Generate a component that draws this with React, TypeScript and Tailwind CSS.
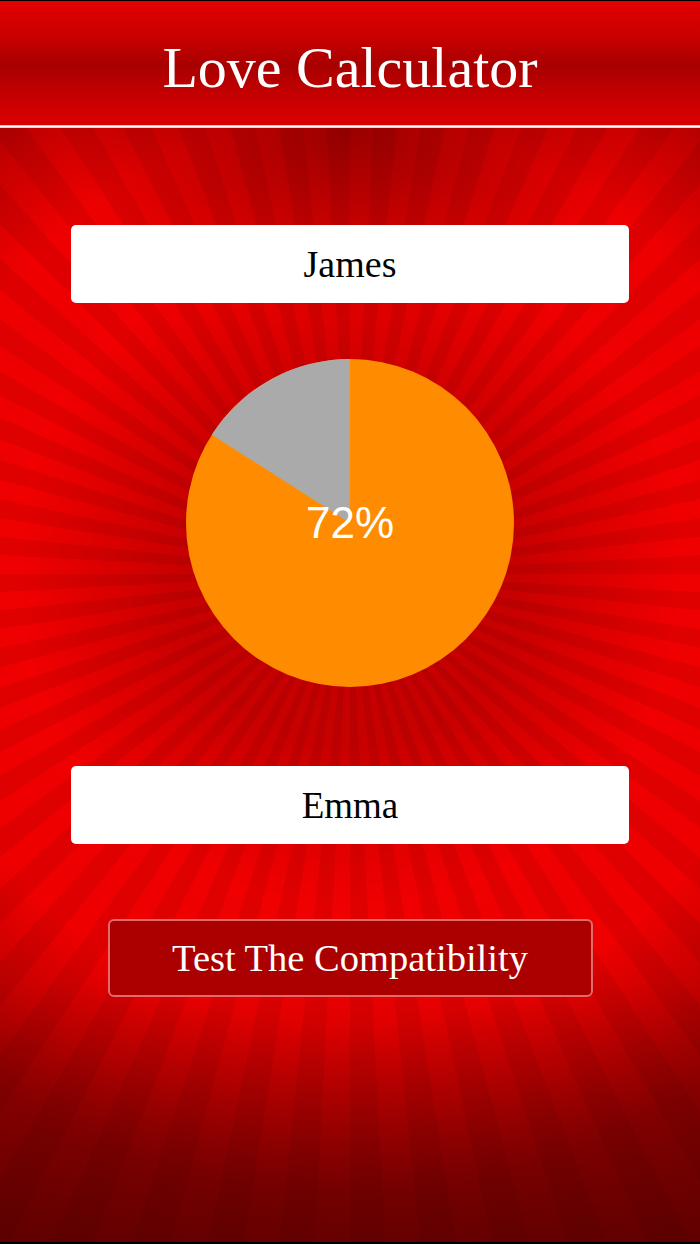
import React from "react";

function Pie() {
  const r = 164;
  const ang = (57.4 * Math.PI) / 180;
  const x = r - r * Math.sin(ang);
  const y = r - r * Math.cos(ang);
  return (
    <div className="relative w-[328px] h-[328px]">
      <svg width="328" height="328" viewBox="0 0 328 328" className="block">
        <circle cx="164" cy="164" r="164" fill="#ff8c00" />
        <path d={`M164 164 L164 0 A164 164 0 0 0 ${x.toFixed(2)} ${y.toFixed(2)} Z`} fill="#aaaaaa" />
      </svg>
      <div className="absolute inset-0 flex items-center justify-center">
        <span className="text-white text-[44px] leading-none font-['Liberation_Sans',Arial,sans-serif]">72%</span>
      </div>
    </div>
  );
}

export default function App() {
  return (
    <div className="h-screen w-full flex flex-col bg-black font-['Liberation_Serif',Georgia,serif] overflow-hidden">
      <div className="mt-px h-[124px] shrink-0 bg-[linear-gradient(to_bottom,#e30000_0%,#c80000_30%,#a80000_52%,#c40000_75%,#dc0000_100%)] pt-[38px] text-center">
        <h1 className="text-white text-[58px] leading-[58px] font-normal">Love Calculator</h1>
      </div>
      <div className="h-[3px] shrink-0 bg-[linear-gradient(to_bottom,#f2a0a0,#ffffff_50%,#f0b0b0)]" />
      <div className="flex-1 mb-[2px] flex flex-col items-center [background-image:radial-gradient(ellipse_280px_190px_at_50%_0%,rgba(50,0,0,0.45),rgba(50,0,0,0)),linear-gradient(to_top,rgba(60,0,0,0.5)_0px,rgba(60,0,0,0)_260px),repeating-conic-gradient(from_0deg_at_50%_40%,rgba(0,0,0,0)_0deg_3deg,rgba(0,0,0,0.065)_3deg_6deg),radial-gradient(circle_at_50%_40%,#c20000_0px,#c80000_170px,#f00000_330px,#ee0000_450px,#c40000_540px,#9a0000_620px,#860000_740px)]">
        <div className="mt-[97px] w-[558px] h-[78px] bg-white rounded-[5px] flex items-center justify-center">
          <span className="text-black text-[38px] leading-none">James</span>
        </div>
        <div className="mt-[56px]">
          <Pie />
        </div>
        <div className="mt-[79px] w-[558px] h-[78px] bg-white rounded-[5px] flex items-center justify-center">
          <span className="text-black text-[37px] leading-none">Emma</span>
        </div>
        <button className="mt-[75px] w-[485px] h-[78px] bg-[#ab0000] border-2 border-[#e26a6a] rounded-[6px] flex items-center justify-center">
          <span className="text-white text-[38.5px] leading-none">Test The Compatibility</span>
        </button>
      </div>
    </div>
  );
}
